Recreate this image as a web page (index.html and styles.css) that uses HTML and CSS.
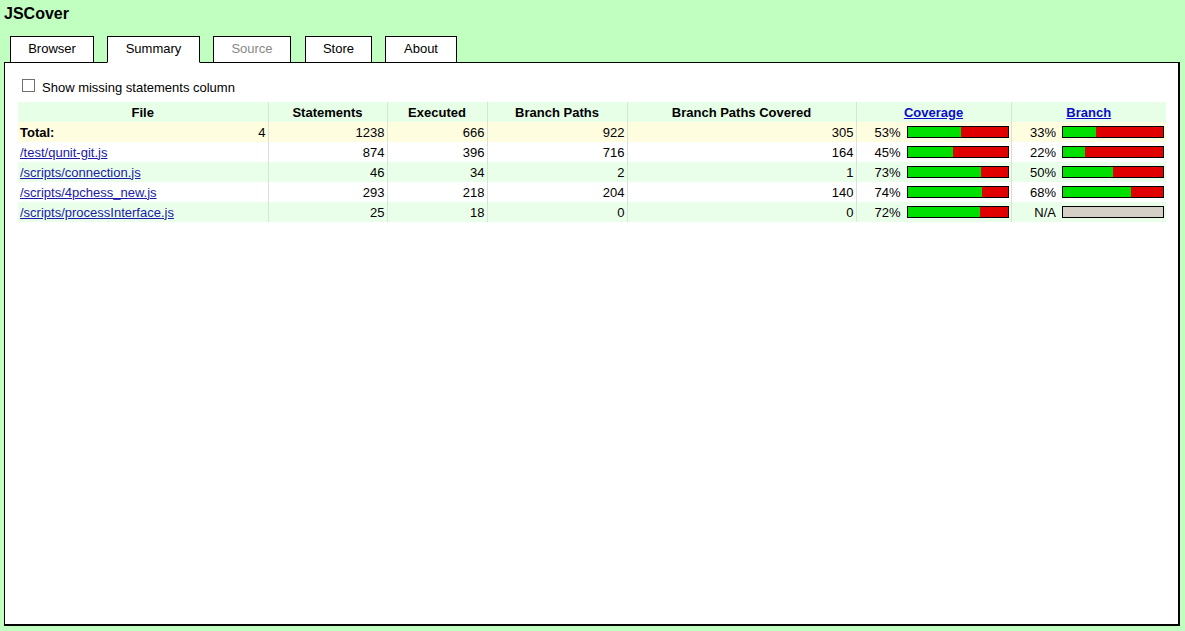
FILE: index.html
```html
<!DOCTYPE html>
<html>
<head>
<meta charset="utf-8">
<title>JSCover</title>
<link rel="stylesheet" href="styles.css">
</head>
<body>
<div class="page">
  <h1 class="title">JSCover</h1>
  <div class="tabs">
    <div class="tab tab-browser">Browser</div>
    <div class="tab tab-summary active">Summary</div>
    <div class="tab tab-source disabled">Source</div>
    <div class="tab tab-store">Store</div>
    <div class="tab tab-about">About</div>
  </div>
  <div class="panel">
    <label class="option"><input type="checkbox" class="check"><span>Show missing statements column</span></label>
    <table class="summary">
      <colgroup>
        <col class="c-file"><col class="c-stmt"><col class="c-exec"><col class="c-bp"><col class="c-bpc"><col class="c-cov"><col class="c-br">
      </colgroup>
      <thead>
        <tr>
          <th>File</th>
          <th>Statements</th>
          <th>Executed</th>
          <th>Branch Paths</th>
          <th>Branch Paths Covered</th>
          <th><a href="#">Coverage</a></th>
          <th><a href="#">Branch</a></th>
        </tr>
      </thead>
      <tbody>
        <tr class="total">
          <td class="file-total"><b>Total:</b><span>4</span></td>
          <td class="num">1238</td>
          <td class="num">666</td>
          <td class="num">922</td>
          <td class="num">305</td>
          <td><div class="cov"><span>53%</span><div class="bar"><div class="g" style="width:53%"></div><div class="r"></div></div></div></td>
          <td><div class="cov"><span>33%</span><div class="bar"><div class="g" style="width:33%"></div><div class="r"></div></div></div></td>
        </tr>
        <tr>
          <td><a href="#">/test/qunit-git.js</a></td>
          <td class="num">874</td>
          <td class="num">396</td>
          <td class="num">716</td>
          <td class="num">164</td>
          <td><div class="cov"><span>45%</span><div class="bar"><div class="g" style="width:45%"></div><div class="r"></div></div></div></td>
          <td><div class="cov"><span>22%</span><div class="bar"><div class="g" style="width:22%"></div><div class="r"></div></div></div></td>
        </tr>
        <tr class="alt">
          <td><a href="#">/scripts/connection.js</a></td>
          <td class="num">46</td>
          <td class="num">34</td>
          <td class="num">2</td>
          <td class="num">1</td>
          <td><div class="cov"><span>73%</span><div class="bar"><div class="g" style="width:73%"></div><div class="r"></div></div></div></td>
          <td><div class="cov"><span>50%</span><div class="bar"><div class="g" style="width:50%"></div><div class="r"></div></div></div></td>
        </tr>
        <tr>
          <td><a href="#">/scripts/4pchess_new.js</a></td>
          <td class="num">293</td>
          <td class="num">218</td>
          <td class="num">204</td>
          <td class="num">140</td>
          <td><div class="cov"><span>74%</span><div class="bar"><div class="g" style="width:74%"></div><div class="r"></div></div></div></td>
          <td><div class="cov"><span>68%</span><div class="bar"><div class="g" style="width:68%"></div><div class="r"></div></div></div></td>
        </tr>
        <tr class="alt">
          <td><a href="#">/scripts/processInterface.js</a></td>
          <td class="num">25</td>
          <td class="num">18</td>
          <td class="num">0</td>
          <td class="num">0</td>
          <td><div class="cov"><span>72%</span><div class="bar"><div class="g" style="width:72%"></div><div class="r"></div></div></div></td>
          <td><div class="cov"><span>N/A</span><div class="bar na"></div></div></td>
        </tr>
      </tbody>
    </table>
  </div>
</div>
</body>
</html>
```

FILE: styles.css
```css
html, body {
  margin: 0;
  padding: 0;
  height: 100%;
}
body {
  background: #c0ffc0;
  font-family: "Liberation Sans", Arial, sans-serif;
  font-size: 13px;
  color: #000;
}
.page {
  box-sizing: border-box;
  height: 100vh;
  display: flex;
  flex-direction: column;
  padding: 4px 5px 5px 4px;
}
.title {
  margin: 0;
  font-size: 16px;
  font-weight: bold;
  line-height: 19px;
  height: 32px;
}
.tabs {
  display: flex;
  padding-left: 6px;
  gap: 13px;
  margin-bottom: -1px;
  position: relative;
  z-index: 1;
}
.tab {
  box-sizing: border-box;
  height: 27px;
  line-height: 24px;
  border: 1px solid #000;
  background: #fff;
  text-align: center;
}
.tab-browser { width: 84px; }
.tab-summary { width: 93px; }
.tab-source { width: 78px; }
.tab-store { width: 67px; margin-left: 1px; }
.tab-about { width: 72px; }
.tab.active { border-bottom-color: #fff; }
.tab.disabled { color: #888; }
.panel {
  flex: 1;
  background: #fff;
  border: 1px solid #000;
  border-right-width: 2px;
  border-bottom-width: 2px;
  padding: 13px 12px 13px 13px;
}
.option {
  display: flex;
  align-items: center;
  height: 20px;
  padding-top: 1px;
  margin-bottom: 5px;
}
.check {
  appearance: none;
  -webkit-appearance: none;
  box-sizing: border-box;
  width: 13px;
  height: 13px;
  margin: 0 7px 3px 4px;
  border: 1px solid #707070;
  background: #fff;
}
.summary {
  width: 1148px;
  table-layout: fixed;
  border-collapse: collapse;
}
.c-file { width: 250px; }
.c-stmt { width: 119px; }
.c-exec { width: 100px; }
.c-bp { width: 140px; }
.c-bpc { width: 229px; }
.c-cov { width: 155px; }
.c-br { width: 155px; }
.summary th, .summary td {
  height: 20px;
  padding: 0 2px;
  border-left: 1px solid #d8e4d8;
  white-space: nowrap;
}
.summary th:first-child, .summary td:first-child { border-left: none; }
.summary thead tr { background: #e6ffe6; }
.summary th { font-weight: bold; text-align: center; }
.summary tr.total { background: #fffde0; }
.summary tr.alt { background: #eaffea; }
.summary td.num { text-align: right; }
.summary a { color: #1a1aa8; text-decoration: underline; }
.summary th a { color: #0b0bcc; }
.file-total {
  display: flex;
  justify-content: space-between;
  align-items: center;
}
.cov {
  display: flex;
  justify-content: flex-end;
  align-items: center;
  gap: 6px;
}
.bar {
  display: flex;
  width: 100px;
  height: 10px;
  border: 1px solid #000;
}
.bar .g { background: #00e000; }
.bar .r { background: #e00000; flex: 1; }
.bar.na { background: #d4d0c8; }
```
